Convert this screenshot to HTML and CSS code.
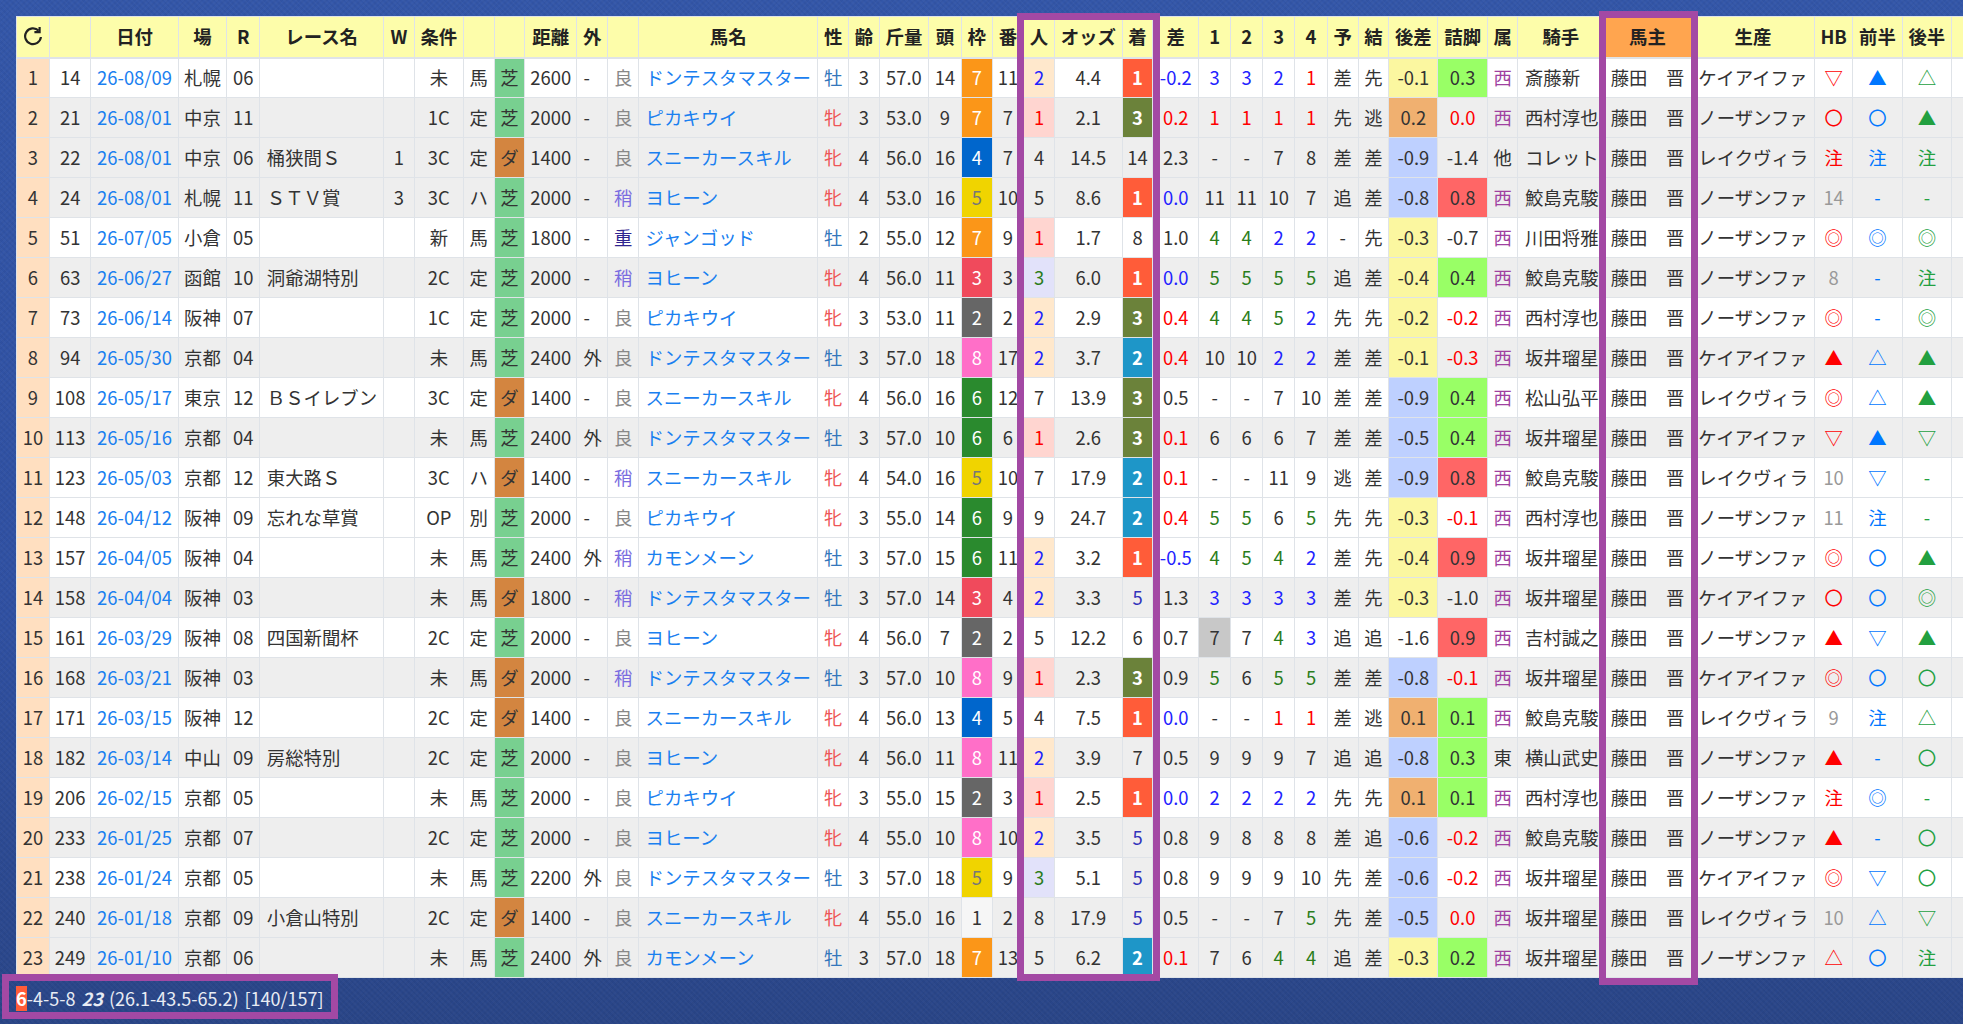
FILE: index.html
```html
<!DOCTYPE html>
<html lang="ja">
<head>
  <meta charset="UTF-8" />
  <title>戦績</title>
  <link rel="stylesheet" href="styles.css">
</head>
<body>

<table class="races">
  <thead>
    <tr>
      <th class="no"><svg class="reload" viewBox="0 0 20 20"><path d="M15.6 4.6A7.9 7.9 0 1 0 17.9 11"/><path d="M16.6 1v5.2h-5.2"/></svg></th>
      <th class="id"></th>
      <th class="date">日付</th>
      <th class="place">場</th>
      <th class="rno">R</th>
      <th class="name">レース名</th>
      <th class="w">W</th>
      <th class="cond">条件</th>
      <th class="type"></th>
      <th class="surface"></th>
      <th class="dist">距離</th>
      <th class="outer">外</th>
      <th class="going"></th>
      <th class="horse">馬名</th>
      <th class="sex">性</th>
      <th class="age">齢</th>
      <th class="kg">斤量</th>
      <th class="heads">頭</th>
      <th class="waku">枠</th>
      <th class="ban">番</th>
      <th class="pop">人</th>
      <th class="odds">オッズ</th>
      <th class="fin">着</th>
      <th class="diff">差</th>
      <th class="c1">1</th>
      <th class="c2">2</th>
      <th class="c3">3</th>
      <th class="c4">4</th>
      <th class="pred">予</th>
      <th class="res">結</th>
      <th class="late">後差</th>
      <th class="tsume">詰脚</th>
      <th class="zoku">属</th>
      <th class="jockey">騎手</th>
      <th class="owner">馬主</th>
      <th class="farm">生産</th>
      <th class="hb">HB</th>
      <th class="half1">前半</th>
      <th class="half2">後半</th>
      <th class="best">最</th>
    </tr>
  </thead>
  <tbody id="rows"></tbody>
</table>

<div class="summary"><b class="win">6</b>-4-5-8 <b><i>23</i></b> (26.1-43.5-65.2) [140/157]</div>

<!-- hand drawn highlight boxes on top of the table -->
<div class="mark mark-pop"></div>
<div class="mark mark-owner"></div>
<div class="mark mark-summary"></div>

<script src="app.js"></script>
</body>
</html>
```

FILE: styles.css
```css
html, body {
  height: 100%;
}

body {
  margin: 0;
  padding: 16px 0 0 16px;
  box-sizing: border-box;
  overflow: hidden;
  position: relative;
  font-family: "Noto Sans CJK JP", "Noto Sans", sans-serif;
  font-size: 18.4px;
  color: #333;
  background:
    repeating-linear-gradient(45deg, rgba(255, 255, 255, 0.025) 0 2px, transparent 2px 4px),
    repeating-linear-gradient(-45deg, rgba(0, 0, 0, 0.03) 0 2px, transparent 2px 4px),
    linear-gradient(180deg, #3356a8 0%, #2f50a2 60%, #294587 100%);
}

.races {
  table-layout: fixed;
  width: 1996px;
  border-collapse: collapse;
  background: #fff;
}

.races th,
.races td {
  box-sizing: border-box;
  padding: 0 0 1px;
  border: 1px solid #dfe3e8;
  text-align: center;
  white-space: nowrap;
  overflow: hidden;
  line-height: 1;
}

.races th {
  height: 41px;
  padding-bottom: 2px;
  background: #fdfdaa;
  color: #222;
  font-weight: 700;
  border-bottom: 2px solid #dfe3e8;
}

.races td {
  height: 40px;
}

.grey td {
  background: #eee;
}

.reload {
  display: block;
  width: 20px;
  height: 20px;
  margin: auto;
}

.reload path {
  fill: none;
  stroke: #222;
  stroke-width: 2.2;
}

/* column widths */
.no { width: 32.8px; }
.id { width: 41.7px; }
.date { width: 87.1px; }
.place { width: 48.8px; }
.rno { width: 32.9px; }
.name { width: 123.7px; }
.w { width: 30.8px; }
.cond { width: 49.2px; }
.type { width: 30.7px; }
.surface { width: 30.7px; }
.dist { width: 51.8px; }
.outer { width: 31.2px; }
.going { width: 30.7px; }
.horse { width: 179.4px; }
.sex { width: 30.7px; }
.age { width: 30.8px; }
.kg { width: 49.2px; }
.heads { width: 32.8px; }
.waku { width: 30.8px; }
.ban { width: 31.5px; }
.pop { width: 30.7px; }
.odds { width: 67.8px; }
.fin { width: 30.8px; }
.diff { width: 45.8px; }
.c1, .c2, .c3 { width: 32px; }
.c4 { width: 32.6px; }
.pred { width: 30.7px; }
.res { width: 30.7px; }
.late { width: 49.3px; }
.tsume { width: 49.3px; }
.zoku { width: 30.7px; }
.jockey { width: 85.8px; }
.owner { width: 87.5px; }
.farm { width: 123.4px; }
.hb { width: 37.9px; }
.half1 { width: 49.7px; }
.half2 { width: 49.2px; }
.best { width: 60px; }

.races th.owner {
  background: #ffa54f;
}

.races td.no {
  background: #ffdfc0;
}

.races td.name,
.races td.outer,
.races td.horse,
.races td.jockey,
.races td.farm {
  text-align: left;
  padding-left: 6.5px;
}

.races a {
  color: #1a80f0;
  text-decoration: none;
}

/* going */
.going.g1 { color: #888; }
.going.g2 { color: #7b6ce0; }
.going.g3 { color: #2f2490; }

/* turf / dirt */
.races td.turf { background: #78d090; }
.races td.dirt { background: #d38540; }

/* sex */
.male { color: #3377bb; }
.female { color: #ee5555; }

/* frame colours */
.races td.w1 { background: #f6f6f6; }
.races td.w2 { background: #666; color: #fff; }
.races td.w3 { background: #f04a5c; color: #fff; }
.races td.w4 { background: #0066cc; color: #fff; }
.races td.w5 { background: #f0d400; color: #777; }
.races td.w6 { background: #2a8a2e; color: #fff; }
.races td.w7 { background: #fb9618; color: #fff; }
.races td.w8 { background: #ff6fc8; color: #fff; }

/* popularity */
.races td.p1 { background: #ffd5d0; color: #f00; }
.races td.p2 { background: #ffe8cc; color: #22f; }
.races td.p3 { background: #e2e2fa; color: #2a7d1a; }

/* finish */
.races td.f1 { background: #ff5c39; color: #fff; font-weight: 700; }
.races td.f2 { background: #1e96c8; color: #fff; font-weight: 700; }
.races td.f3 { background: #6b823a; color: #fff; font-weight: 700; }
.races td.f5 { background: #eee; color: #33b; }

/* text colours for margin and corners */
.red { color: #f00; }
.blue { color: #22f; }
.green { color: #2a7d1a; }
.races td.back { background: #c8c8c8; }

/* late */
.races td.l-plus { background: #f0b070; }
.races td.l-mid { background: #fbf7a0; }
.races td.l-minus { background: #bed0ff; }

/* tsume */
.races td.t-good { background: #99ff66; }
.races td.t-bad { background: #ff6666; }

.zoku.west { color: #a040a0; }

/* marks */
.hb.on { color: #f00; }
.half1.on { color: #07f; }
.half2.on { color: #22a040; }
.hb.num { color: #999; }

.summary {
  margin-top: 8px;
  color: #e8ecf4;
  font-size: 18px;
  word-spacing: 2px;
  line-height: 25px;
}

.summary .win {
  display: inline-block;
  background: #ff5c39;
  color: #fff;
  font-size: 18.4px;
}

.mark {
  position: absolute;
  border: 7px solid #a349a4;
  box-sizing: border-box;
}

.mark-pop {
  left: 1017px;
  top: 13px;
  width: 143px;
  height: 968px;
}

.mark-owner {
  left: 1599px;
  top: 11px;
  width: 99px;
  height: 974px;
}

.mark-summary {
  left: 2px;
  top: 974px;
  width: 336px;
  height: 45px;
}
```

FILE: app.js
```js
// one race per line, owner is the same on all of them
const data = [
  "14,26-08/09,札幌,06,,,未,馬,芝,2600,-,良,ドンテスタマスター,牡,3,57.0,14,7,11,2,4.4,1,-0.2,3,3,2,1,差,先,-0.1,0.3,西,斎藤新,ケイアイファ,▽,▲,△",
  "21,26-08/01,中京,11,,,1C,定,芝,2000,-,良,ピカキウイ,牝,3,53.0,9,7,7,1,2.1,3,0.2,1,1,1,1,先,逃,0.2,0.0,西,西村淳也,ノーザンファ,〇,〇,▲",
  "22,26-08/01,中京,06,桶狭間Ｓ,1,3C,定,ダ,1400,-,良,スニーカースキル,牝,4,56.0,16,4,7,4,14.5,14,2.3,-,-,7,8,差,差,-0.9,-1.4,他,コレット,レイクヴィラ,注,注,注",
  "24,26-08/01,札幌,11,ＳＴＶ賞,3,3C,ハ,芝,2000,-,稍,ヨヒーン,牝,4,53.0,16,5,10,5,8.6,1,0.0,11,11,10,7,追,差,-0.8,0.8,西,鮫島克駿,ノーザンファ,14,-,-",
  "51,26-07/05,小倉,05,,,新,馬,芝,1800,-,重,ジャンゴッド,牡,2,55.0,12,7,9,1,1.7,8,1.0,4,4,2,2,-,先,-0.3,-0.7,西,川田将雅,ノーザンファ,◎,◎,◎",
  "63,26-06/27,函館,10,洞爺湖特別,,2C,定,芝,2000,-,稍,ヨヒーン,牝,4,56.0,11,3,3,3,6.0,1,0.0,5,5,5,5,追,差,-0.4,0.4,西,鮫島克駿,ノーザンファ,8,-,注",
  "73,26-06/14,阪神,07,,,1C,定,芝,2000,-,良,ピカキウイ,牝,3,53.0,11,2,2,2,2.9,3,0.4,4,4,5,2,先,先,-0.2,-0.2,西,西村淳也,ノーザンファ,◎,-,◎",
  "94,26-05/30,京都,04,,,未,馬,芝,2400,外,良,ドンテスタマスター,牡,3,57.0,18,8,17,2,3.7,2,0.4,10,10,2,2,差,差,-0.1,-0.3,西,坂井瑠星,ケイアイファ,▲,△,▲",
  "108,26-05/17,東京,12,ＢＳイレブン,,3C,定,ダ,1400,-,良,スニーカースキル,牝,4,56.0,16,6,12,7,13.9,3,0.5,-,-,7,10,差,差,-0.9,0.4,西,松山弘平,レイクヴィラ,◎,△,▲",
  "113,26-05/16,京都,04,,,未,馬,芝,2400,外,良,ドンテスタマスター,牡,3,57.0,10,6,6,1,2.6,3,0.1,6,6,6,7,差,差,-0.5,0.4,西,坂井瑠星,ケイアイファ,▽,▲,▽",
  "123,26-05/03,京都,12,東大路Ｓ,,3C,ハ,ダ,1400,-,稍,スニーカースキル,牝,4,54.0,16,5,10,7,17.9,2,0.1,-,-,11,9,逃,差,-0.9,0.8,西,鮫島克駿,レイクヴィラ,10,▽,-",
  "148,26-04/12,阪神,09,忘れな草賞,,OP,別,芝,2000,-,良,ピカキウイ,牝,3,55.0,14,6,9,9,24.7,2,0.4,5,5,6,5,先,先,-0.3,-0.1,西,西村淳也,ノーザンファ,11,注,-",
  "157,26-04/05,阪神,04,,,未,馬,芝,2400,外,稍,カモンメーン,牡,3,57.0,15,6,11,2,3.2,1,-0.5,4,5,4,2,差,先,-0.4,0.9,西,坂井瑠星,ノーザンファ,◎,〇,▲",
  "158,26-04/04,阪神,03,,,未,馬,ダ,1800,-,稍,ドンテスタマスター,牡,3,57.0,14,3,4,2,3.3,5,1.3,3,3,3,3,差,先,-0.3,-1.0,西,坂井瑠星,ケイアイファ,〇,〇,◎",
  "161,26-03/29,阪神,08,四国新聞杯,,2C,定,芝,2000,-,良,ヨヒーン,牝,4,56.0,7,2,2,5,12.2,6,0.7,7,7,4,3,追,追,-1.6,0.9,西,吉村誠之,ノーザンファ,▲,▽,▲",
  "168,26-03/21,阪神,03,,,未,馬,ダ,2000,-,稍,ドンテスタマスター,牡,3,57.0,10,8,9,1,2.3,3,0.9,5,6,5,5,差,差,-0.8,-0.1,西,坂井瑠星,ケイアイファ,◎,〇,〇",
  "171,26-03/15,阪神,12,,,2C,定,ダ,1400,-,良,スニーカースキル,牝,4,56.0,13,4,5,4,7.5,1,0.0,-,-,1,1,差,逃,0.1,0.1,西,鮫島克駿,レイクヴィラ,9,注,△",
  "182,26-03/14,中山,09,房総特別,,2C,定,芝,2000,-,良,ヨヒーン,牝,4,56.0,11,8,11,2,3.9,7,0.5,9,9,9,7,追,追,-0.8,0.3,東,横山武史,ノーザンファ,▲,-,〇",
  "206,26-02/15,京都,05,,,未,馬,芝,2000,-,良,ピカキウイ,牝,3,55.0,15,2,3,1,2.5,1,0.0,2,2,2,2,先,先,0.1,0.1,西,西村淳也,ノーザンファ,注,◎,-",
  "233,26-01/25,京都,07,,,2C,定,芝,2000,-,良,ヨヒーン,牝,4,55.0,10,8,10,2,3.5,5,0.8,9,8,8,8,差,追,-0.6,-0.2,西,鮫島克駿,ノーザンファ,▲,-,〇",
  "238,26-01/24,京都,05,,,未,馬,芝,2200,外,良,ドンテスタマスター,牡,3,57.0,18,5,9,3,5.1,5,0.8,9,9,9,10,先,差,-0.6,-0.2,西,坂井瑠星,ケイアイファ,◎,▽,〇",
  "240,26-01/18,京都,09,小倉山特別,,2C,定,ダ,1400,-,良,スニーカースキル,牝,4,55.0,16,1,2,8,17.9,5,0.5,-,-,7,5,先,差,-0.5,0.0,西,坂井瑠星,レイクヴィラ,10,△,▽",
  "249,26-01/10,京都,06,,,未,馬,芝,2400,外,良,カモンメーン,牡,3,57.0,18,7,13,5,6.2,2,0.1,7,6,4,4,追,差,-0.3,0.2,西,坂井瑠星,ノーザンファ,△,〇,注"
];

const keys = ["id", "date", "place", "rno", "name", "w", "cond", "type", "surface", "dist", "outer", "going", "horse", "sex", "age", "kg", "heads", "waku", "ban", "pop", "odds", "fin", "diff", "c1", "c2", "c3", "c4", "pred", "res", "late", "tsume", "zoku", "jockey", "farm", "hb", "half1", "half2"];

const greyRows = [2, 3, 4, 6, 8, 10, 14, 16, 18, 20, 22, 23];

// extra class for a cell, from its column and value
function cellClass(key, value) {
  const n = parseFloat(value);
  switch (key) {
    case "surface": return value === "芝" ? "turf" : "dirt";
    case "going": return value === "良" ? "g1" : value === "稍" ? "g2" : "g3";
    case "sex": return value === "牡" ? "male" : "female";
    case "waku": return "w" + value;
    case "pop": return n <= 3 ? "p" + value : "";
    case "fin":
      if (n <= 3) return "f" + value;
      return n === 5 ? "f5" : "";
    case "diff":
      if (n <= 0) return "blue";
      return n < 0.5 ? "red" : "";
    case "c1": case "c2": case "c3": case "c4":
      if (n === 1) return "red";
      if (n === 2 || n === 3) return "blue";
      return n === 4 || n === 5 ? "green" : "";
    case "late":
      if (n >= 0) return "l-plus";
      if (n > -0.5) return "l-mid";
      return n > -1 ? "l-minus" : "";
    case "tsume":
      if (n >= 0.8) return "t-bad";
      if (n > 0) return "t-good";
      return n > -0.5 ? "red" : "";
    case "zoku": return value === "西" ? "west" : "";
    case "hb": return isNaN(n) ? "on" : "num";
    case "half1": case "half2": return "on";
  }
  return "";
}

function addCell(tr, key, value, extra) {
  const td = document.createElement("td");
  td.className = (key + " " + (extra || "")).trim();
  if (key === "date" || key === "horse") {
    const a = document.createElement("a");
    a.href = "#";
    a.textContent = value;
    td.appendChild(a);
  } else {
    td.textContent = value;
  }
  tr.appendChild(td);
}

const tbody = document.getElementById("rows");

data.forEach((line, i) => {
  const values = line.split(",");
  const tr = document.createElement("tr");
  if (greyRows.includes(i + 1)) tr.className = "grey";

  addCell(tr, "no", i + 1);
  keys.forEach((key, k) => {
    if (key === "farm") addCell(tr, "owner", "藤田　晋");
    // the first corner of race 15 is greyed out in the source
    const extra = i === 14 && key === "c1" ? "back" : cellClass(key, values[k]);
    addCell(tr, key, values[k], extra);
  });
  addCell(tr, "best", "");
  tbody.appendChild(tr);
});
```
